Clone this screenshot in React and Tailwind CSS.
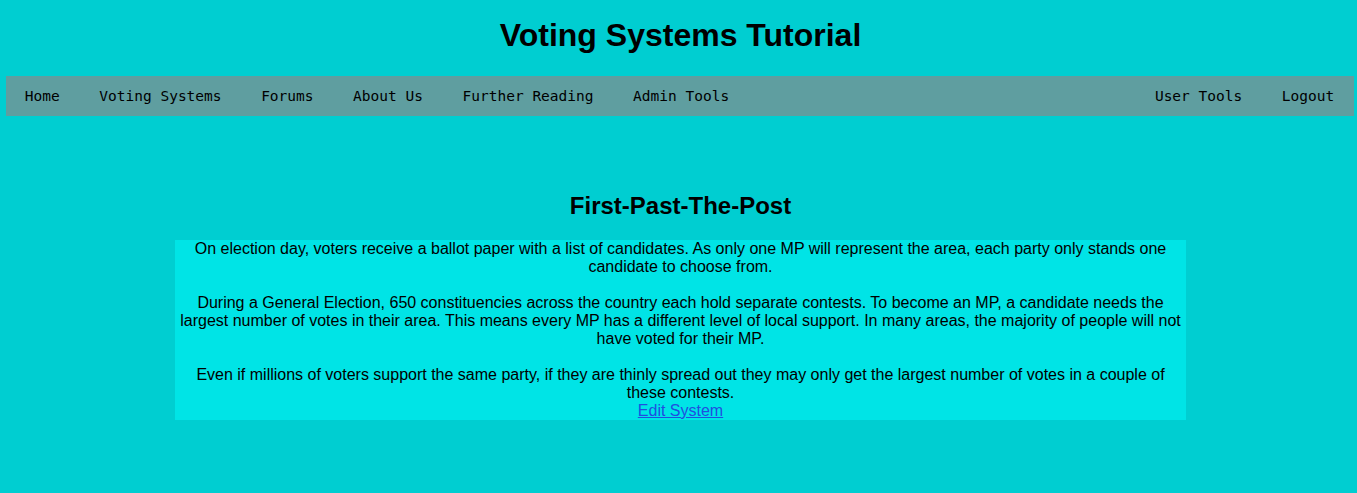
const NAV_LEFT = ['Home', 'Voting Systems', 'Forums', 'About Us', 'Further Reading', 'Admin Tools'];
const NAV_RIGHT = ['User Tools', 'Logout'];

const NavItem = ({ label }) => (
    <a href="#" className="px-[19.8px] pt-[2px] h-full flex items-center text-black no-underline">
        {label}
    </a>
);

export default function App() {
    return (
        <div className="min-h-screen bg-[#00ced1] text-black font-['Liberation_Sans',Arial,sans-serif] pt-[17px]">
            <h1 className="text-[32px] leading-[37px] font-bold text-center pl-[4px]">Voting Systems Tutorial</h1>

            <nav className="mt-[22px] ml-[6px] mr-[3px] h-[40px] bg-[#5f9ea0] flex justify-between font-['DejaVu_Sans_Mono',monospace] text-[14.5px]">
                <div className="flex h-full -ml-[1px]">
                    {NAV_LEFT.map(l => <NavItem key={l} label={l} />)}
                </div>
                <div className="flex h-full">
                    {NAV_RIGHT.map(l => <NavItem key={l} label={l} />)}
                </div>
            </nav>

            <h2 className="mt-[76px] text-[24px] leading-[28px] font-bold text-center pl-[4px]">First-Past-The-Post</h2>

            <div className="mt-[20px] flex justify-center pl-[4px]">
                <div className="w-[1011px] bg-[#00e4e6] text-center text-[16px] leading-[18px]">
                    On election day, voters receive a ballot paper with a list of candidates. As only one MP will represent the area, each party only stands one<br />
                    candidate to choose from.<br />
                    <br />
                    During a General Election, 650 constituencies across the country each hold separate contests. To become an MP, a candidate needs the<br />
                    largest number of votes in their area. This means every MP has a different level of local support. In many areas, the majority of people will not<br />
                    have voted for their MP.<br />
                    <br />
                    Even if millions of voters support the same party, if they are thinly spread out they may only get the largest number of votes in a couple of<br />
                    these contests.<br />
                    <a href="#" className="text-[#1f4fe0] underline">Edit System</a>
                </div>
            </div>
        </div>
    );
}
